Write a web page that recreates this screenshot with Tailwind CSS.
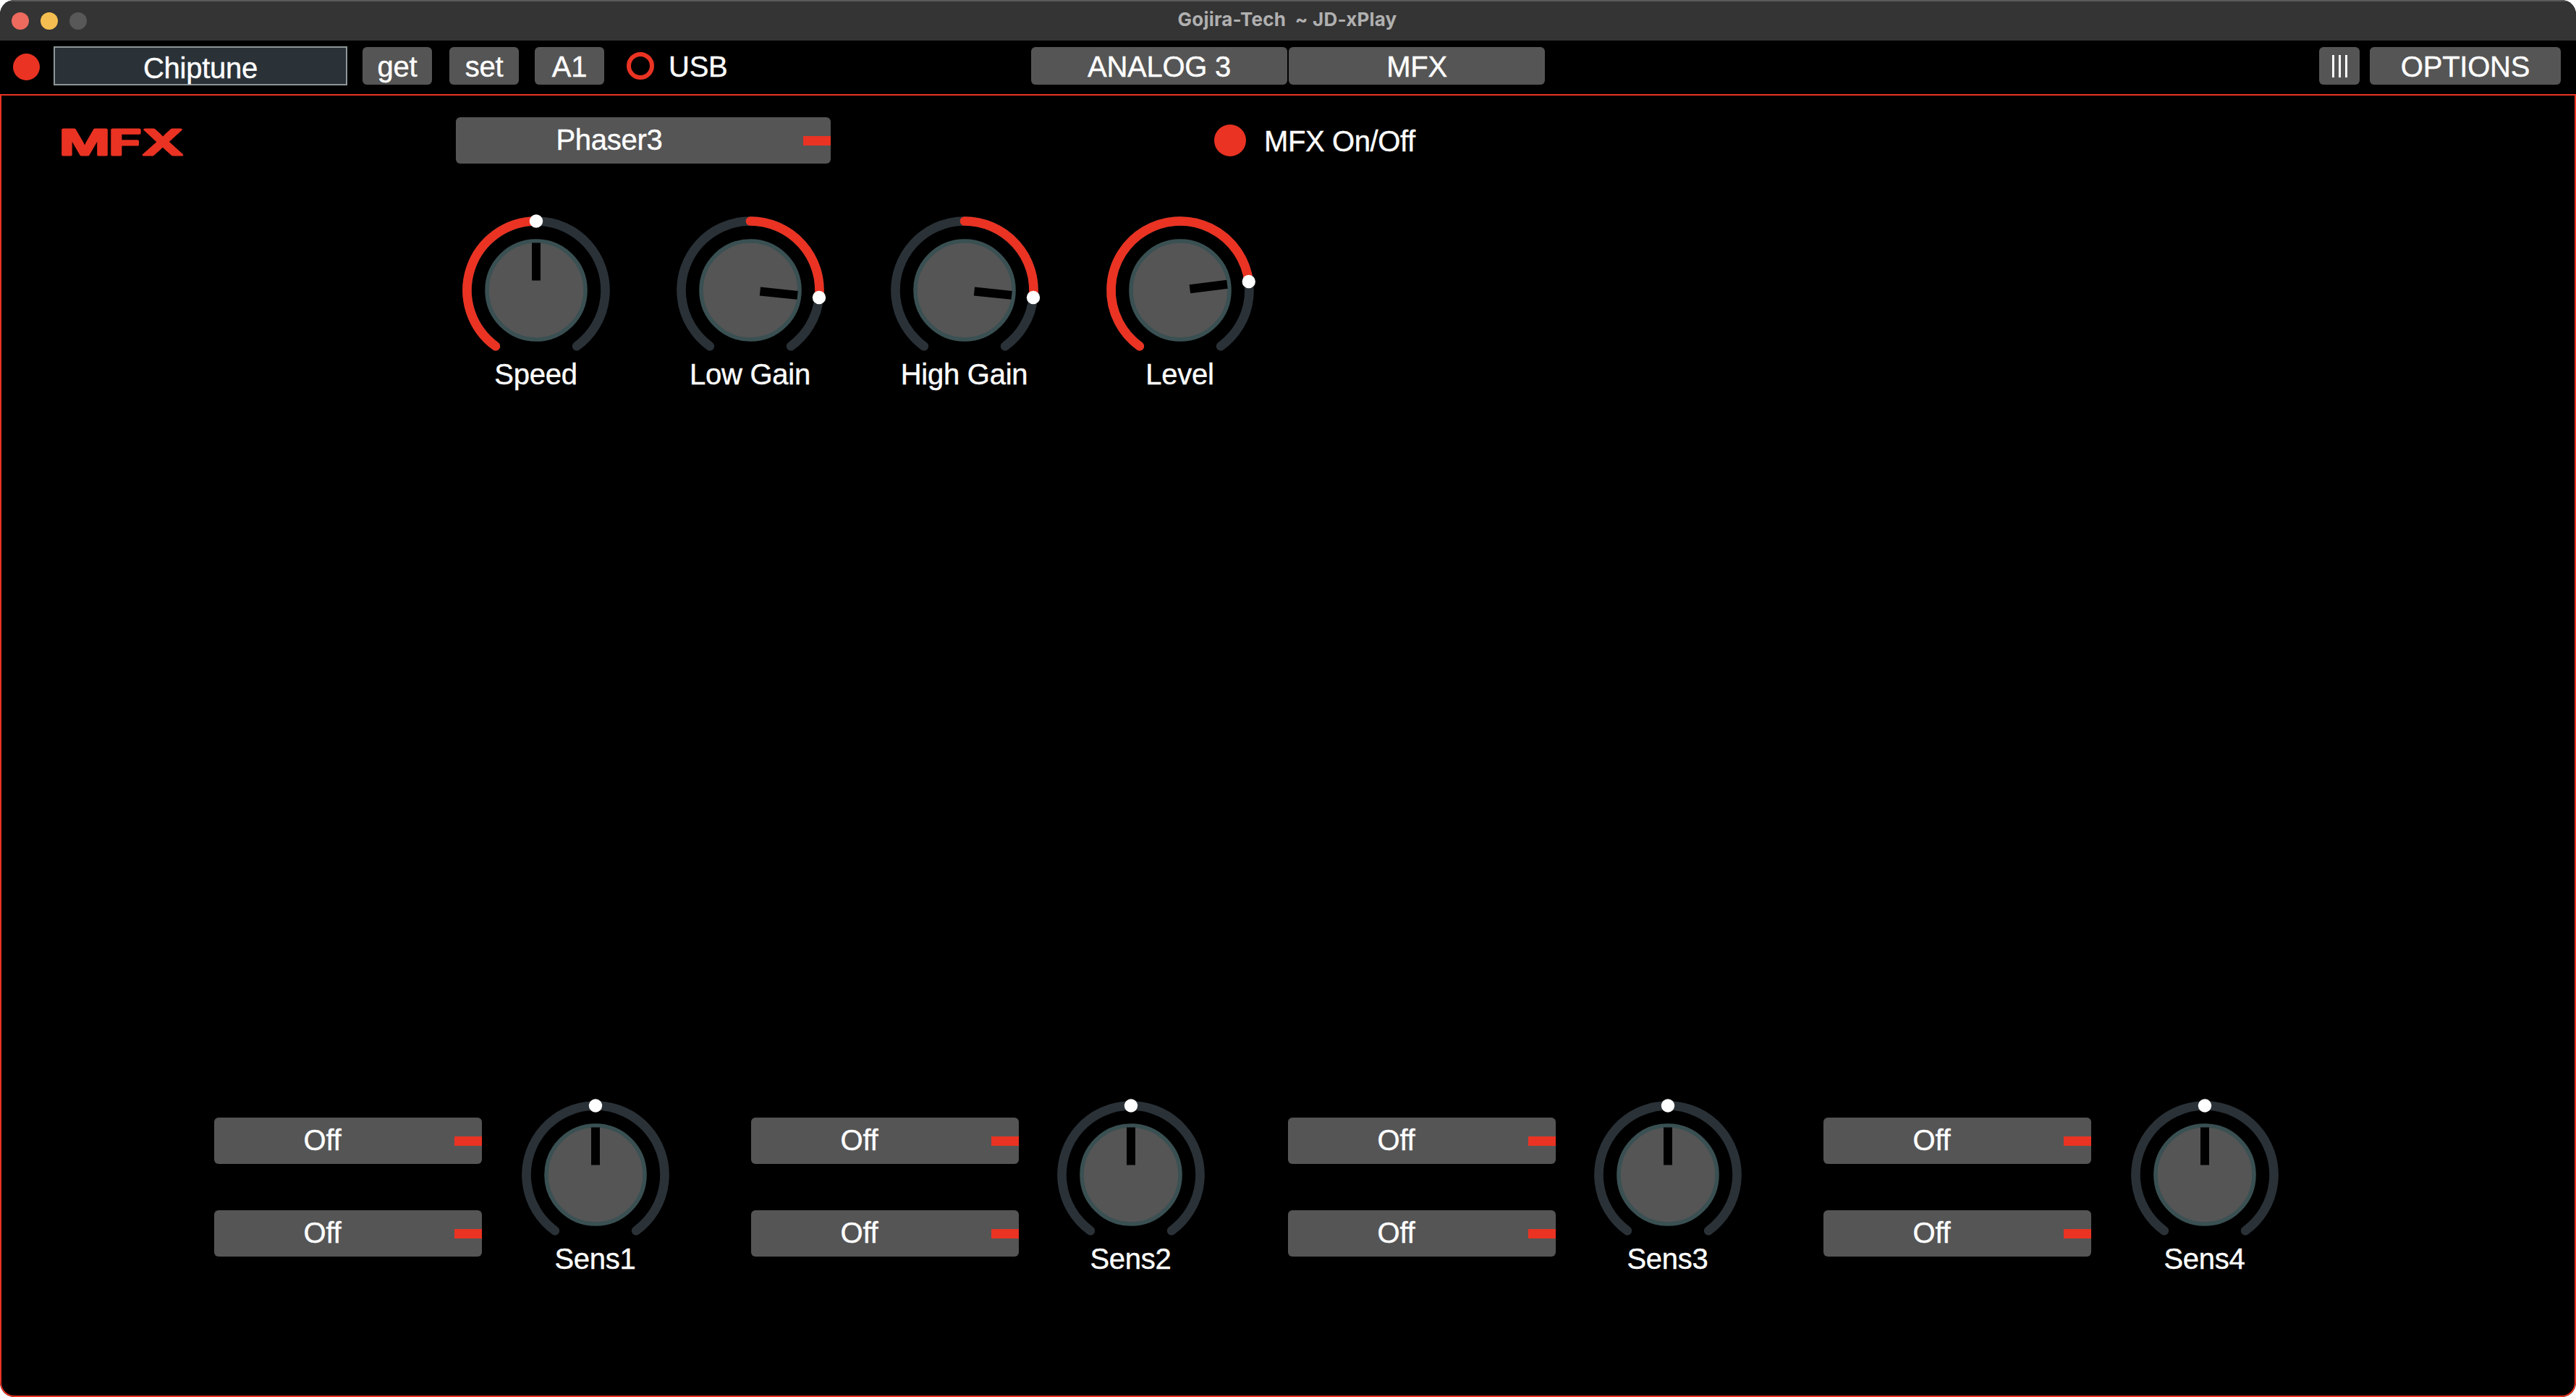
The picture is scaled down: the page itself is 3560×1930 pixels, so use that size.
<!DOCTYPE html>
<html lang="en">
<head>
  <meta charset="UTF-8">
  <meta name="viewport" content="width=device-width, initial-scale=1.0">
  <title>Gojira-Tech ~ JD-xPlay</title>
  <script src="https://cdn.jsdelivr.net/npm/@tailwindcss/browser@4"></script>
</head>
<body class="bg-white">
  <div class="w-[3560px] h-[1930px] bg-black text-white rounded-[20px] overflow-hidden flex flex-col font-['Liberation_Sans',Arial,sans-serif] text-[40px] leading-[46px] tracking-[-0.25px] [-webkit-text-stroke:0.4px_currentColor] whitespace-nowrap">

    <!-- title bar -->
    <header class="h-14 shrink-0 bg-[#343434] border-t-2 border-[#5a5a5a] flex items-center px-4">
      <div class="flex gap-4 w-[112px]">
        <span class="size-6 rounded-full bg-[#ed6a5e]"></span>
        <span class="size-6 rounded-full bg-[#f4bf50]"></span>
        <span class="size-6 rounded-full bg-[#585858]"></span>
      </div>
      <h1 class="flex-1 pr-[114px] text-center font-['Inter',sans-serif] font-bold text-[26px] leading-none tracking-[0.2px] [-webkit-text-stroke:0px] text-[#b0b0b0] whitespace-pre -mt-1">Gojira-Tech  ~ JD-xPlay</h1>
    </header>

    <!-- toolbar -->
    <nav class="h-[74px] shrink-0 flex items-start pt-[9px] pl-[18px] pr-[21px]">
      <span class="size-[37px] mt-[9px] rounded-full bg-[#ea3323]"></span>
      <div class="w-[406px] h-[54px] ml-[19px] -mt-px border-2 border-[#8e9698] bg-[#2a3238] text-center leading-[56px]">Chiptune</div>
      <button class="w-24 h-[52px] ml-[21px] rounded-md bg-[#555] leading-[54px]">get</button>
      <button class="w-24 h-[52px] ml-6 rounded-md bg-[#555] leading-[54px]">set</button>
      <button class="w-24 h-[52px] ml-[22px] rounded-md bg-[#555] leading-[54px]">A1</button>
      <span class="size-[38px] mt-[7px] ml-[31px] rounded-full border-[6px] border-[#ea3323]"></span>
      <span class="w-[80px] ml-5 leading-[54px]">USB</span>
      <div class="flex gap-0.5 ml-[421px]">
        <button class="w-[354px] h-[52px] rounded-md bg-[#555] leading-[54px]">ANALOG 3</button>
        <button class="w-[354px] h-[52px] rounded-md bg-[#555] leading-[54px]">MFX</button>
      </div>
      <div class="flex gap-3.5 ml-auto">
        <button class="w-14 h-[52px] rounded-md bg-[#555] flex items-center justify-center gap-1.5">
          <span class="w-[3px] h-[31px] bg-white"></span>
          <span class="w-[3px] h-[31px] bg-white"></span>
          <span class="w-[3px] h-[31px] bg-white"></span>
        </button>
        <button class="w-[264px] h-[52px] rounded-md bg-[#555] leading-[54px]">OPTIONS</button>
      </div>
    </nav>

    <!-- effect panel -->
    <main class="flex-1 border-2 border-[#ea3323] rounded-b-[20px] flex flex-col justify-between pt-[30px] pb-[166px]">
      <section>
        <div class="flex items-start h-16">
          <svg class="w-[220px] h-[90px] ml-[63px] overflow-visible [-webkit-text-stroke:initial]" viewBox="-20 0 220 90" fill="#ea3323" stroke="#ea3323" stroke-width="3" stroke-linejoin="round" font-family="Inter, sans-serif" font-weight="600" font-size="48" letter-spacing="0">
            <text y="51.5" x="-3" textLength="70" lengthAdjust="spacingAndGlyphs">M</text>
            <text y="51.5" x="65" textLength="46" lengthAdjust="spacingAndGlyphs">F</text>
            <text y="51.5" x="112" textLength="56" lengthAdjust="spacingAndGlyphs">X</text>
          </svg>
          <div class="w-[518px] h-16 ml-[345px] rounded-md bg-[#555] flex items-center justify-between">
            <span class="w-[424px] text-center -mt-0.5">Phaser3</span>
            <span class="w-[38px] h-[13px] bg-[#ea3323]"></span>
          </div>
          <span class="size-11 ml-[530px] mt-2.5 rounded-full bg-[#ea3323]"></span>
          <span class="ml-[25px] mt-2.5 tracking-[-0.4px]">MFX On/Off</span>
        </div>
        <div id="params" class="flex pl-[589px] pt-[67px]"></div>
      </section>
      <section id="sens" class="flex pl-[294px]"></section>
    </main>
  </div>

  <script>
    const R = 95.5;

    function pt(deg) {
      const a = deg * Math.PI / 180;
      return (150 + R * Math.sin(a)).toFixed(2) + ' ' + (108 - R * Math.cos(a)).toFixed(2);
    }

    function arc(from, to, color) {
      const large = to - from > 180 ? 1 : 0;
      return `<path d="M${pt(from)} A${R} ${R} 0 ${large} 1 ${pt(to)}" fill="none" stroke="${color}" stroke-width="12.6" stroke-linecap="round"/>`;
    }

    // angles in degrees from 12 o'clock, travel is -144..144
    function knob(label, angle, from) {
      const [x, y] = pt(angle).split(' ');
      return `<div class="w-[300px] flex flex-col items-center">
        <svg class="w-[300px] h-[204px]" viewBox="0 0 300 204">
          ${arc(-144, 144, '#2a3238')}
          ${from === angle ? '' : arc(from, angle, '#ea3323')}
          <circle cx="150" cy="108" r="68" fill="#555" stroke="#3a5052" stroke-width="5.6"/>
          <rect x="144" y="42.5" width="12" height="52" transform="rotate(${angle} 150 108)"/>
          <circle cx="${x}" cy="${y}" r="9.2" fill="#fff"/>
        </svg>
        <span class="-mt-[3px] -ml-px">${label}</span>
      </div>`;
    }

    const params = [['Speed', 0, -144], ['Low Gain', 96, 0], ['High Gain', 96, 0], ['Level', 82.8, -144]];
    const offsets = [0, 296, 592, 890];
    document.getElementById('params').innerHTML = params.map((p, i) =>
      `<div style="width:${(offsets[i + 1] || 1186) - offsets[i]}px">${knob(...p)}</div>`).join('');

    const off = `<div class="w-[370px] h-16 rounded-md bg-[#555] flex items-center justify-between">
      <span class="w-[299px] text-center -mt-0.5">Off</span>
      <span class="w-[38px] h-[13px] bg-[#ea3323]"></span>
    </div>`;
    const widths = [742, 742, 740, 740];
    const gaps = [7, 5, 5, 7];
    document.getElementById('sens').innerHTML = widths.map((w, i) =>
      `<div class="flex shrink-0" style="width:${w}px">
        <div class="flex flex-col gap-16 pt-[29px]">${off}${off}</div>
        <div style="margin-left:${gaps[i]}px">${knob('Sens' + (i + 1), 0, 0)}</div>
      </div>`).join('');
  </script>
</body>
</html>
